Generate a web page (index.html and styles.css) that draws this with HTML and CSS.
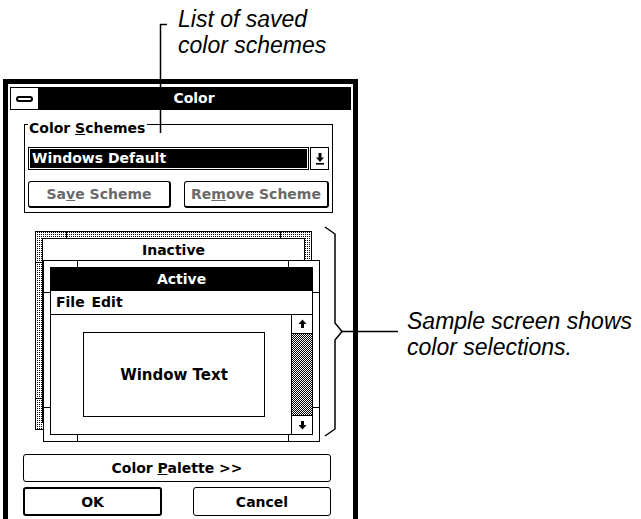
FILE: index.html
```html
<!DOCTYPE html>
<html lang="en">
<head>
    <meta charset="UTF-8">
    <title>Color</title>
    <link rel="stylesheet" href="styles.css">
</head>
<body>

<div class="figure">
    <div class="note-top">List of saved<br>color schemes</div>

    <div class="main">
        <!-- Color dialog -->
        <div class="window">
            <div class="caption">
                <div class="sysbox"><span class="sysbar"></span></div>
                <div class="caption-text">Color</div>
            </div>

            <div class="dlg-body">
                <div class="group">
                    <div class="group-label">Color <u>S</u>chemes</div>
                    <div class="combo">
                        <div class="combo-field"><span>Windows Default</span></div>
                        <div class="combo-btn">
                            <svg width="10" height="13" viewBox="0 0 10 13"><path d="M3.5 1h3v4.5h2.5l-4 4.5-4-4.5h2.5z"/><rect x="1" y="11" width="8" height="1.6"/></svg>
                        </div>
                    </div>
                    <div class="group-buttons">
                        <div class="btn btn-gray btn-save"><span>Sa<u>v</u>e Scheme</span></div>
                        <div class="btn btn-gray btn-remove"><span>Re<u>m</u>ove Scheme</span></div>
                    </div>
                </div>

                <!-- Sample screen -->
                <div class="sample">
                    <div class="win win-inactive">
                        <div class="win-frame">
                            <div class="title-inactive">Inactive</div>
                        </div>
                    </div>
                    <div class="win win-active">
                        <div class="win-frame">
                            <div class="title-active">Active</div>
                            <div class="menubar">File Edit</div>
                            <div class="client">
                                <div class="client-area">
                                    <div class="textbox">Window Text</div>
                                </div>
                                <div class="vscroll">
                                    <div class="sb-arrow sb-up">
                                        <svg width="9" height="10" viewBox="0 0 9 10"><path d="M4.5 0.5l4 4.5h-2.5v4h-3v-4h-2.5z"/></svg>
                                    </div>
                                    <div class="sb-track"></div>
                                    <div class="sb-arrow sb-down">
                                        <svg width="9" height="10" viewBox="0 0 9 10"><path d="M3 1h3v4h2.5l-4 4.5-4-4.5h2.5z"/></svg>
                                    </div>
                                </div>
                            </div>
                        </div>
                    </div>
                </div>

                <div class="btn btn-wide"><span>Color <u>P</u>alette &gt;&gt;</span></div>
                <div class="btn-row">
                    <div class="btn btn-default btn-ok">OK</div>
                    <div class="btn btn-cancel">Cancel</div>
                </div>
            </div>
        </div>

        <div class="note-side">Sample screen shows<br>color selections.</div>
    </div>

    <!-- leader lines -->
    <svg class="leader leader-top" width="24" height="120" viewBox="0 0 24 120">
        <path d="M17 6.5H10.5V115"/>
    </svg>
    <svg class="leader leader-side" width="84" height="220" viewBox="0 0 84 220">
        <path d="M7 5L17 12V101L24 109.5L17 118V207L7 214"/>
        <path d="M24 109.5H80"/>
    </svg>
</div>

</body>
</html>
```

FILE: styles.css
```css
body {
    margin: 0;
    background: #fff;
    color: #000;
    font-family: "DejaVu Sans", sans-serif;
}

* {
    box-sizing: border-box;
}

.figure {
    position: relative;
    width: 641px;
    height: 519px;
    overflow: hidden;
}

/* Annotations */
.note-top {
    height: 79px;
    padding: 6px 0 0 178px;
    font-family: "Liberation Sans", Arial, sans-serif;
    font-style: italic;
    font-size: 23px;
    line-height: 26px;
}

.note-side {
    margin: 229px 0 0 49px;
    font-family: "Liberation Sans", Arial, sans-serif;
    font-style: italic;
    font-size: 23px;
    line-height: 26px;
    white-space: nowrap;
}

.main {
    display: flex;
    align-items: flex-start;
}

.leader {
    position: absolute;
    fill: none;
    stroke: #000;
    stroke-width: 1.5;
    stroke-linejoin: round;
}

.leader-top {
    left: 150px;
    top: 18px;
}

.leader-side {
    left: 318px;
    top: 222px;
}

/* Dialog window */
.window {
    width: 355px;
    margin-left: 3px;
    border: 5px solid #000;
    background: #fff;
    font-weight: bold;
    font-size: 14px;
}

.caption {
    display: flex;
    height: 23px;
    margin: 3px 2px 0;
    border: 1px solid #000;
    background: #000;
}

.sysbox {
    width: 27px;
    background: #fff;
    display: flex;
    align-items: center;
    justify-content: center;
}

.sysbar {
    width: 17px;
    height: 6px;
    border: 2px solid #000;
    border-radius: 3px;
    background: #fff;
}

.caption-text {
    flex: 1;
    color: #fff;
    text-align: center;
    line-height: 21px;
}

.dlg-body {
    padding: 14px 22px 4px 15px;
}

/* Group box */
.group {
    margin: 0 -2px 0 1px;
    border: 1px solid #000;
    padding: 0 3px 4px;
}

.group-label {
    display: inline-block;
    height: 16px;
    line-height: 16px;
    margin: -5px 0 0 0;
    padding: 0 2px 0 1px;
    background: #fff;
    vertical-align: top;
}

.combo {
    display: flex;
    height: 23px;
    margin-top: 6px;
}

.combo-field {
    flex: 1;
    border: 1px solid #000;
    padding: 1px;
}

.combo-field span {
    display: block;
    height: 100%;
    background: #000;
    color: #fff;
    padding-left: 2px;
    line-height: 19px;
}

.combo-btn {
    width: 19px;
    margin-left: 1px;
    border: 1px solid #000;
    display: flex;
    align-items: center;
    justify-content: center;
}

.group-buttons {
    display: flex;
    justify-content: space-between;
    margin-top: 11px;
}

.btn {
    display: flex;
    align-items: center;
    justify-content: center;
    border: 1px solid #000;
    border-radius: 3px;
    white-space: nowrap;
}

.btn-gray {
    color: #6a6a6a;
    border-right-width: 2px;
    border-bottom-width: 2px;
}

.btn-save {
    width: 143px;
    height: 27px;
}

.btn-remove {
    width: 145px;
    height: 27px;
}

.btn-wide {
    height: 28px;
    margin-top: 12px;
}

.btn-row {
    display: flex;
    justify-content: space-between;
    margin-top: 5px;
}

.btn-ok {
    width: 139px;
    height: 29px;
}

.btn-default {
    border-width: 2px;
}

.btn-cancel {
    width: 138px;
    height: 29px;
}

/* Sample screen */
.sample {
    position: relative;
    width: 285px;
    height: 211px;
    margin: 18px 0 0 12px;
}

.win {
    border: 1px solid #000;
    padding: 6px;
}

.win-frame {
    height: 100%;
    border: 1px solid #000;
    background: #fff;
}

.win-inactive {
    width: 277px;
    height: 199px;
    background:
        linear-gradient(#000, #000) 30px 0 / 1px 6px no-repeat,
        linear-gradient(#000, #000) 244px 0 / 1px 6px no-repeat,
        linear-gradient(#000, #000) 0 30px / 6px 1px no-repeat,
        linear-gradient(#000, #000) 269px 30px / 6px 1px no-repeat,
        linear-gradient(#000, #000) 0 166px / 6px 1px no-repeat,
        linear-gradient(#000, #000) 269px 166px / 6px 1px no-repeat,
        linear-gradient(#000, #000) 30px 191px / 1px 6px no-repeat,
        linear-gradient(#000, #000) 244px 191px / 1px 6px no-repeat,
        conic-gradient(#000 25%, #fff 0) 0 0 / 2px 2px;
}

.title-inactive {
    height: 22px;
    line-height: 22px;
    text-align: center;
    border-bottom: 1px solid #000;
}

.win-active {
    position: absolute;
    left: 8px;
    top: 29px;
    width: 277px;
    height: 182px;
    background:
        linear-gradient(#000, #000) 33px 0 / 1px 6px no-repeat,
        linear-gradient(#000, #000) 244px 0 / 1px 6px no-repeat,
        linear-gradient(#000, #000) 0 31px / 6px 1px no-repeat,
        linear-gradient(#000, #000) 269px 31px / 6px 1px no-repeat,
        linear-gradient(#000, #000) 0 146px / 6px 1px no-repeat,
        linear-gradient(#000, #000) 269px 146px / 6px 1px no-repeat,
        linear-gradient(#000, #000) 33px 174px / 1px 6px no-repeat,
        linear-gradient(#000, #000) 244px 174px / 1px 6px no-repeat,
        #fff;
}

.win-active .win-frame {
    display: flex;
    flex-direction: column;
}

.title-active {
    height: 23px;
    line-height: 23px;
    background: #000;
    color: #fff;
    text-align: center;
}

.menubar {
    height: 24px;
    line-height: 23px;
    padding-left: 5px;
    border-bottom: 1px solid #000;
    word-spacing: 2px;
}

.client {
    flex: 1;
    display: flex;
}

.client-area {
    flex: 1;
    padding: 17px 0 0 32px;
}

.textbox {
    width: 182px;
    height: 85px;
    border: 1px solid #000;
    display: flex;
    align-items: center;
    justify-content: center;
    font-size: 15px;
}

.vscroll {
    width: 21px;
    border-left: 1px solid #000;
    display: flex;
    flex-direction: column;
}

.sb-arrow {
    height: 19px;
    display: flex;
    align-items: center;
    justify-content: center;
}

.sb-up {
    border-bottom: 1px solid #000;
}

.sb-down {
    border-top: 1px solid #000;
}

.sb-track {
    flex: 1;
    background: conic-gradient(#000 25%, #fff 0 50%, #000 0 75%, #fff 0) 0 0 / 2px 2px;
}
```
